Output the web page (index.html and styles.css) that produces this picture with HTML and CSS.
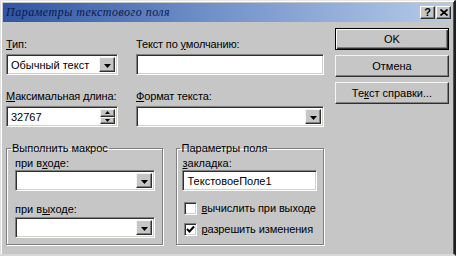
FILE: index.html
```html
<!DOCTYPE html>
<html lang="ru">
<head>
<meta charset="utf-8">
<title>Параметры текстового поля</title>
<link rel="stylesheet" href="styles.css">
</head>
<body>
<div class="window">
  <div class="titlebar">
    <span class="title">Параметры текстового поля</span>
    <div class="tb-buttons">
      <span class="tb-btn tb-help">?</span>
      <span class="tb-btn"><svg width="8" height="7" viewBox="0 0 8 7"><path d="M0.5 0.5 L7.5 6.5 M7.5 0.5 L0.5 6.5" stroke="#000" stroke-width="1.8"/></svg></span>
    </div>
  </div>
  <div class="content">
    <div class="main">
      <div class="row row-top">
        <div class="field col-a">
          <div class="lbl"><u>Т</u>ип:</div>
          <div class="box sunken combo">
            <span class="val">Обычный текст</span>
            <span class="ddbtn raised"><svg width="7" height="4" viewBox="0 0 7 4"><path d="M0 0 H7 L3.5 4 Z" fill="#000"/></svg></span>
          </div>
        </div>
        <div class="field col-b">
          <div class="lbl">Текст по <u>у</u>молчанию:</div>
          <div class="box sunken"></div>
        </div>
      </div>
      <div class="row row-mid">
        <div class="field col-a">
          <div class="lbl"><u>М</u>аксимальная длина:</div>
          <div class="box sunken combo">
            <span class="val">32767</span>
            <span class="spin">
              <span class="spinbtn raised"><svg width="5" height="3" viewBox="0 0 5 3"><path d="M0 3 H5 L2.5 0 Z" fill="#000"/></svg></span>
              <span class="spinbtn raised"><svg width="5" height="3" viewBox="0 0 5 3"><path d="M0 0 H5 L2.5 3 Z" fill="#000"/></svg></span>
            </span>
          </div>
        </div>
        <div class="field col-b">
          <div class="lbl"><u>Ф</u>ормат текста:</div>
          <div class="box sunken combo">
            <span class="val"></span>
            <span class="ddbtn raised"><svg width="7" height="4" viewBox="0 0 7 4"><path d="M0 0 H7 L3.5 4 Z" fill="#000"/></svg></span>
          </div>
        </div>
      </div>
      <div class="row row-groups">
        <fieldset class="group group-macro">
          <legend>Выполнить макрос</legend>
          <div class="glbl">при в<u>х</u>оде:</div>
          <div class="box sunken combo">
            <span class="val"></span>
            <span class="ddbtn raised"><svg width="7" height="4" viewBox="0 0 7 4"><path d="M0 0 H7 L3.5 4 Z" fill="#000"/></svg></span>
          </div>
          <div class="glbl second">при в<u>ы</u>ходе:</div>
          <div class="box sunken combo">
            <span class="val"></span>
            <span class="ddbtn raised"><svg width="7" height="4" viewBox="0 0 7 4"><path d="M0 0 H7 L3.5 4 Z" fill="#000"/></svg></span>
          </div>
        </fieldset>
        <fieldset class="group group-params">
          <legend>Параметры поля</legend>
          <div class="glbl"><u>з</u>акладка:</div>
          <div class="box sunken text"><span class="val">ТекстовоеПоле1</span></div>
          <div class="check first">
            <span class="cb sunken"></span>
            <span class="cbl"><u>в</u>ычислить при выходе</span>
          </div>
          <div class="check">
            <span class="cb sunken"><svg width="9" height="9" viewBox="0 0 9 9"><path d="M1 4 L3.5 6.5 L8 1.5" fill="none" stroke="#000" stroke-width="2"/></svg></span>
            <span class="cbl"><u>р</u>азрешить изменения</span>
          </div>
        </fieldset>
      </div>
    </div>
    <div class="buttons">
      <div class="btn raised default">OK</div>
      <div class="btn raised">Отмена</div>
      <div class="btn raised">Те<u>к</u>ст справки...</div>
    </div>
  </div>
</div>
</body>
</html>
```

FILE: styles.css
```css
html, body {
  margin: 0;
  padding: 0;
  background: #c6c6c6;
}

.window {
  width: 456px;
  height: 256px;
  box-sizing: border-box;
  background: #c6c6c6;
  border-style: solid;
  border-width: 1px 2px 2px 1px;
  border-color: #e8e8e8 #202020 #d8d8d8 #e0e0e0;
  box-shadow: inset 1px 1px #ffffff, inset -1px 0 #505050;
  padding: 2px 2px 0 2px;
  font-family: "Liberation Sans", Arial, sans-serif;
  font-size: 11px;
  color: #000;
  white-space: nowrap;
}

.titlebar {
  height: 19px;
  display: flex;
  align-items: center;
  justify-content: space-between;
  padding: 0 1px 0 3px;
  background: linear-gradient(to right, #2f55a4 0%, #6f8fc8 45%, #b5cbe9 100%);
}

.title {
  font-family: "Liberation Serif", "Times New Roman", serif;
  font-style: italic;
  font-size: 12px;
  color: #0d1a48;
  letter-spacing: 0.5px;
}

.tb-buttons {
  display: flex;
  gap: 1px;
}

.tb-btn {
  width: 15px;
  height: 13px;
  box-sizing: border-box;
  display: flex;
  align-items: center;
  justify-content: center;
  background: #c6c6c6;
  border: 1px solid;
  border-color: #ffffff #303030 #303030 #ffffff;
  box-shadow: inset -1px -1px #808080;
  font-weight: bold;
  font-size: 11px;
  line-height: 1;
}

.content {
  display: flex;
  gap: 11px;
  padding: 6px 0 0 3px;
}

.main {
  width: 318px;
  display: flex;
  flex-direction: column;
}

.row {
  display: flex;
}

.row-top {
  margin-top: 9px;
  gap: 18px;
}

.row-mid {
  margin-top: 14px;
  gap: 18px;
}

.col-a {
  width: 112px;
}

.col-b {
  width: 188px;
}

.lbl {
  line-height: 14px;
  height: 14px;
  margin-bottom: 3px;
  letter-spacing: -0.15px;
}

.box {
  height: 21px;
  box-sizing: border-box;
}

.sunken {
  background: #ffffff;
  border: 1px solid;
  border-color: #808080 #ffffff #ffffff #808080;
  box-shadow: inset 1px 1px #303030, inset -1px -1px #d4d0c8;
}

.raised {
  background: #c6c6c6;
  border: 1px solid;
  border-color: #f4f4f4 #303030 #303030 #f4f4f4;
  box-shadow: inset -1px -1px #808080;
}

.combo {
  display: flex;
  align-items: stretch;
  padding: 2px;
}

.combo .val, .text .val {
  flex: 1;
  display: flex;
  align-items: center;
  padding-left: 2px;
}

.text {
  display: flex;
  padding: 2px;
}

.ddbtn {
  width: 16px;
  box-sizing: border-box;
  display: flex;
  align-items: center;
  justify-content: center;
  padding-top: 2px;
}

.spin {
  display: flex;
  flex-direction: column;
  width: 15px;
}

.spinbtn {
  flex: 1;
  box-sizing: border-box;
  display: flex;
  align-items: center;
  justify-content: center;
}

.row-groups {
  margin-top: 15px;
  gap: 13px;
}

.group {
  margin: 0;
  box-sizing: border-box;
  height: 103px;
  border: 1px solid #808080;
  box-shadow: inset 1px 1px #ffffff, 1px 1px #ffffff;
  padding: 0 7px 0 8px;
  display: flex;
  flex-direction: column;
  min-width: 0;
}

.group legend {
  padding: 0 1px;
  margin-left: -4px;
  line-height: 12px;
}

.group-macro {
  width: 158px;
}

.group-params {
  width: 148px;
  padding: 0 6px 0 5px;
}

.group-params legend {
  margin-left: -2px;
}

.glbl {
  line-height: 14px;
  margin-top: 2px;
  margin-bottom: 0;
}

.glbl.second {
  margin-top: 11px;
  margin-bottom: 1px;
}

.group-params .box {
  width: 135px;
}

.check {
  display: flex;
  align-items: center;
  gap: 4px;
  margin-top: 7px;
  line-height: 14px;
}

.check.first {
  margin-top: 10px;
}

.cbl {
  letter-spacing: -0.1px;
}

.cb {
  flex: none;
  width: 13px;
  height: 13px;
  box-sizing: border-box;
  display: flex;
  align-items: center;
  justify-content: center;
  margin-left: 2px;
}

.buttons {
  display: flex;
  flex-direction: column;
  gap: 5px;
}

.btn {
  width: 114px;
  height: 22px;
  box-sizing: border-box;
  display: flex;
  align-items: center;
  justify-content: center;
}

.btn.default {
  border-color: #000;
  box-shadow: inset 1px 1px #ffffff, inset -1px -1px #303030, inset -2px -2px #808080;
}
```
